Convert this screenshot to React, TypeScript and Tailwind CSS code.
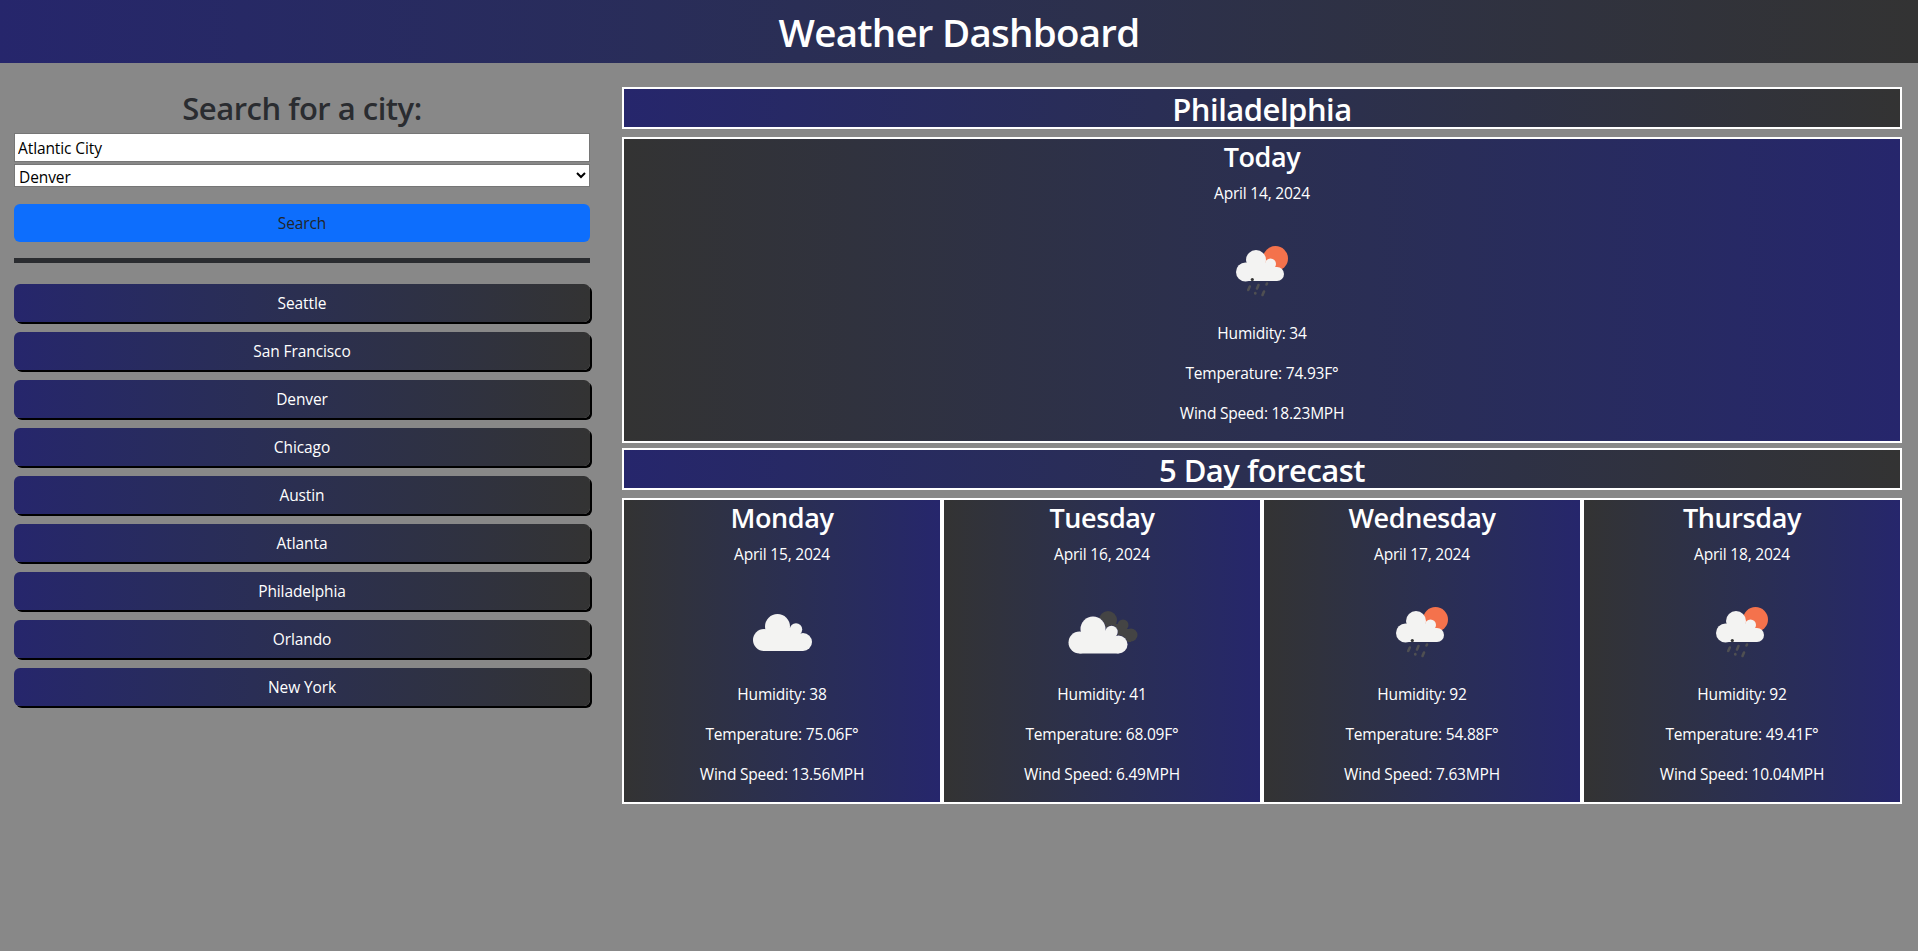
const cities = ["Seattle", "San Francisco", "Denver", "Chicago", "Austin", "Atlanta", "Philadelphia", "Orlando", "New York"];

const forecast = [
  { day: "Monday", date: "April 15, 2024", icon: "clouds", humidity: 38, temp: "75.06", wind: "13.56" },
  { day: "Tuesday", date: "April 16, 2024", icon: "broken", humidity: 41, temp: "68.09", wind: "6.49" },
  { day: "Wednesday", date: "April 17, 2024", icon: "rain", humidity: 92, temp: "54.88", wind: "7.63" },
  { day: "Thursday", date: "April 18, 2024", icon: "rain", humidity: 92, temp: "49.41", wind: "10.04" },
];

const RainIcon = () => (
  <svg viewBox="0 0 100 100" className="w-[100px] h-[100px]">
    <circle cx="63.5" cy="37.5" r="12.5" fill="#f4724c" />
    <g fill="#f3f3f2">
      <circle cx="33.5" cy="51" r="9.5" />
      <circle cx="44" cy="39" r="10" />
      <circle cx="58.5" cy="43" r="5.5" />
      <circle cx="65" cy="53" r="7" />
      <rect x="33" y="46" width="32" height="14" />
      <rect x="44" y="42" width="16" height="5" />
    </g>
    <g stroke="#4f4f52" strokeWidth="2.6" strokeLinecap="round">
      <line x1="37.8" y1="65.5" x2="36.2" y2="69" />
      <line x1="46.5" y1="64" x2="45" y2="67.5" />
      <line x1="55" y1="62.5" x2="54.5" y2="63.5" />
      <line x1="43.3" y1="72" x2="43.3" y2="72.5" />
      <line x1="52" y1="70.5" x2="50.5" y2="74" />
    </g>
    <circle cx="40.3" cy="58.5" r="1.6" fill="#333" />
  </svg>
);

const CloudsIcon = () => (
  <svg viewBox="0 0 100 100" className="w-[100px] h-[100px]">
    <g fill="#f3f3f2">
      <circle cx="32" cy="58" r="11" />
      <circle cx="45.5" cy="44.5" r="12.5" />
      <circle cx="64" cy="47.5" r="6.2" />
      <circle cx="71" cy="60" r="9" />
      <rect x="32" y="52" width="39" height="17" />
      <rect x="45" y="46" width="19" height="7" />
    </g>
  </svg>
);

const BrokenIcon = () => (
  <svg viewBox="0 0 100 100" className="w-[100px] h-[100px]">
    <g fill="#444">
      <circle cx="56" cy="38" r="9" />
      <circle cx="71" cy="43" r="5.5" />
      <circle cx="79" cy="53" r="6.5" />
      <rect x="56" y="47" width="23" height="13" />
      <rect x="60" y="42" width="11" height="8" />
    </g>
    {/* thin dark edge where the front cloud sits on the back one */}
    <g fill="#34345a" stroke="#34345a" strokeWidth="1">
      <circle cx="41" cy="47" r="12.5" />
      <circle cx="59.5" cy="50" r="6.2" />
      <circle cx="66.5" cy="62.5" r="9" />
    </g>
    <g fill="#f3f3f2">
      <circle cx="27.5" cy="60.5" r="11" />
      <circle cx="41" cy="47" r="12.5" />
      <circle cx="59.5" cy="50" r="6.2" />
      <circle cx="66.5" cy="62.5" r="9" />
      <rect x="27.5" y="54.5" width="39" height="17" />
      <rect x="40.5" y="48.5" width="19" height="7" />
    </g>
  </svg>
);

const Icon = ({ name }: { name: string }) => {
  if (name === "clouds") return <CloudsIcon />;
  if (name === "broken") return <BrokenIcon />;
  return <RainIcon />;
};

type WeatherProps = { title: string; date: string; icon: string; humidity: number; temp: string; wind: string };

const WeatherCard = ({ title, date, icon, humidity, temp, wind }: WeatherProps) => (
  <div className="border-2 border-white bg-linear-to-r from-[#333333] to-[#26266c] text-white text-center h-[306px] flex flex-col items-center text-[15.5px] tracking-[-0.2px]">
    <h3 className="mt-px text-[27px] leading-[34px] font-semibold tracking-[-0.4px] mb-[7px]">{title}</h3>
    <p className="leading-6 mb-4">{date}</p>
    <Icon name={icon} />
    <p className="leading-6 mb-4">Humidity: {humidity}</p>
    <p className="leading-6 mb-4">Temperature: {temp}F°</p>
    <p className="leading-6">Wind Speed: {wind}MPH</p>
  </div>
);

const App = () => {
  return (
    <div className="min-h-[951px] bg-[#888888] font-['Open_Sans',sans-serif] text-[#212529]">
      <header className="h-[63px] bg-linear-to-r from-[#26266c] to-[#333333] flex items-center justify-center">
        <h1 className="text-[38.5px] leading-[48px] font-semibold tracking-[-0.75px] text-white">Weather Dashboard</h1>
      </header>

      <main className="flex pt-6 pl-[14px] pr-4">
        {/* Search column */}
        <aside className="w-[576px] shrink-0 flex flex-col">
          <h2 className="pt-[2px] text-[31px] leading-[38px] font-semibold tracking-[-0.5px] text-center text-[#2a2c30] mb-[6px]">Search for a city:</h2>
          <input
            defaultValue="Atlantic City"
            className="w-full h-[29px] bg-white border border-[#767676] px-[3px] text-[15.5px] tracking-[-0.1px] text-black"
          />
          <select
            defaultValue="Denver"
            className="w-full h-[23px] mt-[2px] bg-white border border-[#767676] text-[15.5px] tracking-[-0.1px] text-black"
          >
            {cities.map((c) => (
              <option key={c}>{c}</option>
            ))}
          </select>
          <button className="mt-[17px] h-[38px] pt-px rounded-md bg-[#0d6efd] text-[15.5px] tracking-[-0.1px] text-[#212529]">Search</button>
          <hr className="mt-4 h-[5px] border-0 bg-[#2a2c30]" />
          <div className="mt-[21px] flex flex-col gap-[10px]">
            {cities.map((c) => (
              <button
                key={c}
                className="h-[38px] pt-px rounded-md bg-linear-to-r from-[#26266c] to-[#333333] text-[15.5px] tracking-[-0.1px] text-white shadow-[2px_2px_0_#000]"
              >
                {c}
              </button>
            ))}
          </div>
        </aside>

        {/* Weather column */}
        <section className="flex-1 ml-8 flex flex-col">
          <h2 className="h-[42px] border-2 border-white bg-linear-to-r from-[#26266c] to-[#333333] text-[31px] leading-[40px] font-semibold tracking-[-0.5px] text-white text-center">
            Philadelphia
          </h2>
          <div className="mt-2">
            <WeatherCard title="Today" date="April 14, 2024" icon="rain" humidity={34} temp="74.93" wind="18.23" />
          </div>
          <h2 className="mt-[5px] h-[42px] border-2 border-white bg-linear-to-r from-[#26266c] to-[#333333] text-[31px] leading-[40px] font-semibold tracking-[-0.5px] text-white text-center">
            5 Day forecast
          </h2>
          <div className="mt-2 grid grid-cols-4">
            {forecast.map((f) => (
              <WeatherCard key={f.day} title={f.day} date={f.date} icon={f.icon} humidity={f.humidity} temp={f.temp} wind={f.wind} />
            ))}
          </div>
        </section>
      </main>
    </div>
  );
};

export default App;
